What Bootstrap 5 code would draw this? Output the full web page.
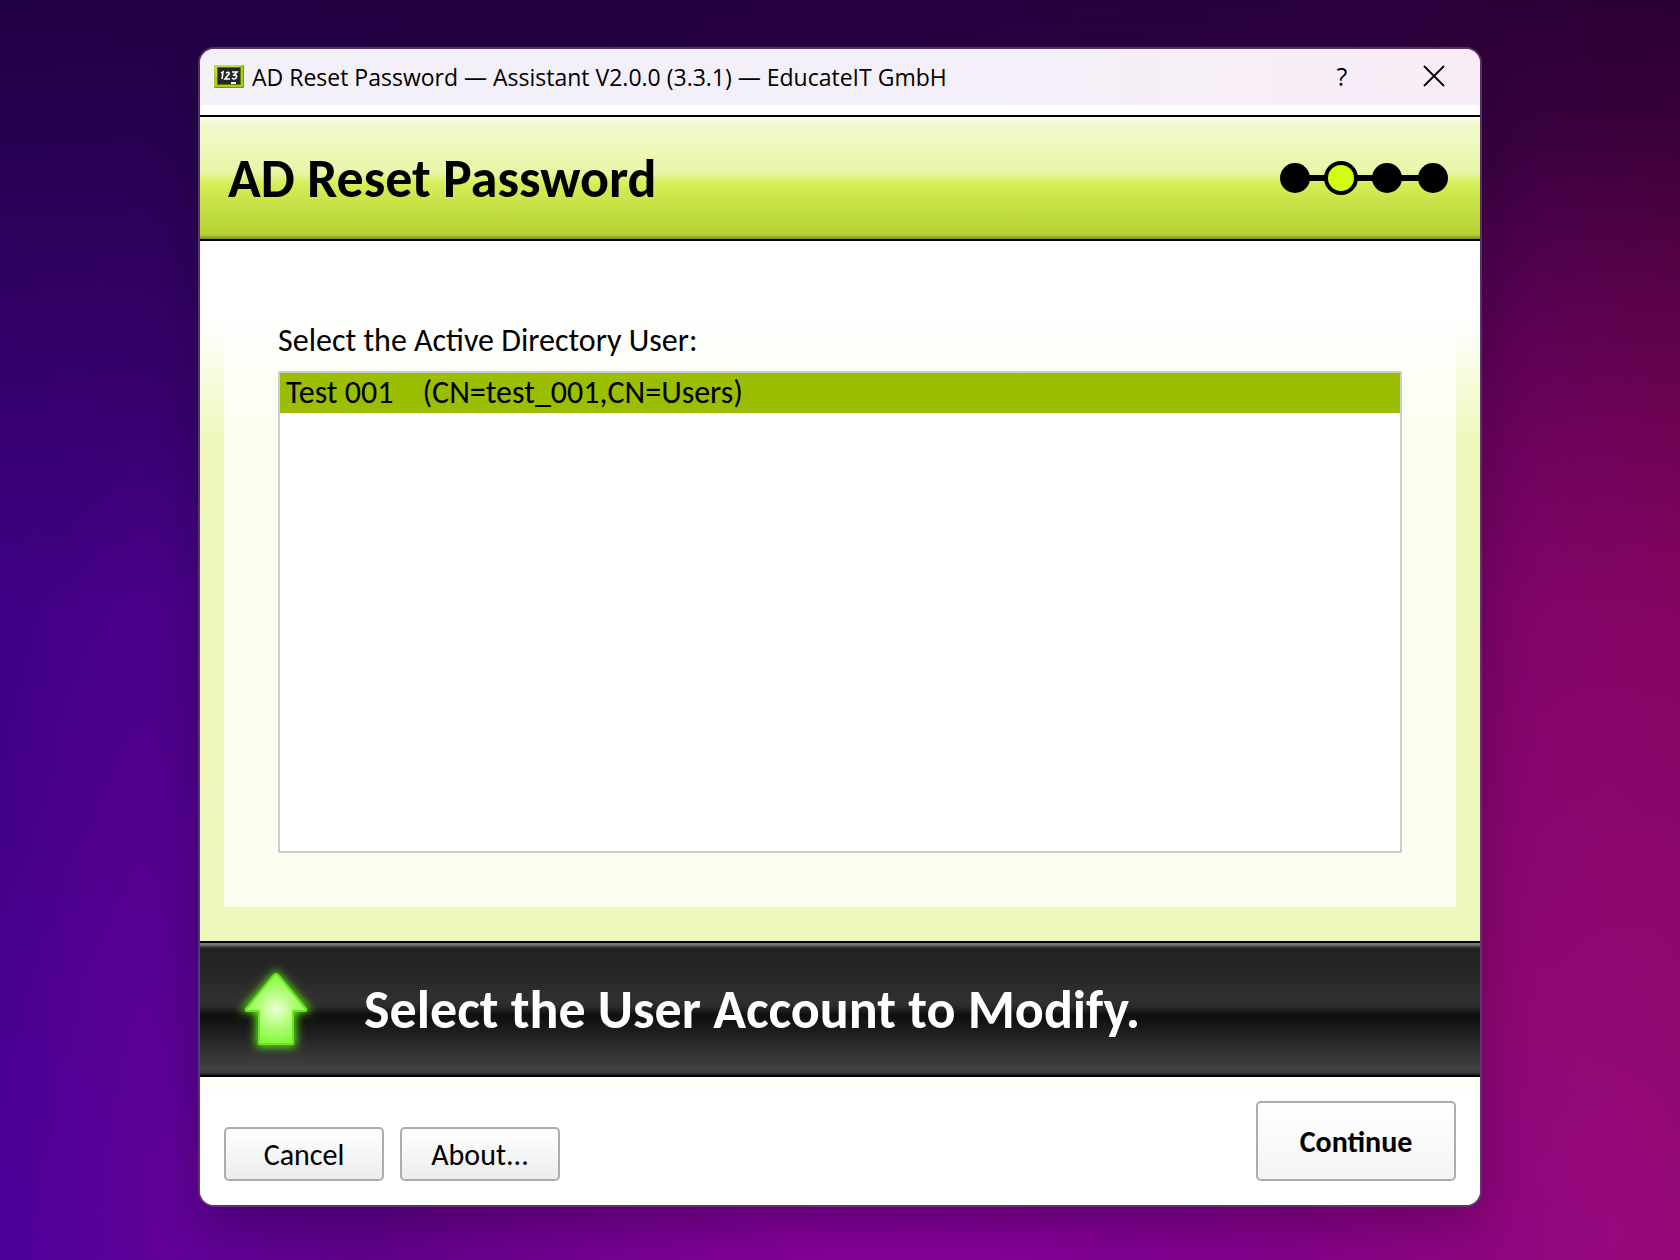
<!DOCTYPE html>
<html lang="en">
<head>
<meta charset="utf-8">
<meta name="viewport" content="width=device-width, initial-scale=1">
<title>AD Reset Password</title>
<link rel="stylesheet" href="https://cdn.jsdelivr.net/npm/bootstrap@5.3.0/dist/css/bootstrap.min.css">
<style>
  body {
    font-family: Carlito, Lato, sans-serif;
    font-size: 32px;
    line-height: 36px;
    color: #000;
    padding: 47px 24px 53px;
    background:
      radial-gradient(ellipse 50% 34% at 54% 103%, rgba(142, 0, 160, .95), rgba(142, 0, 160, 0)),
      radial-gradient(ellipse 30% 88% at 96% 98%, rgba(154, 10, 122, .95), rgba(148, 8, 118, .75) 40%, rgba(140, 4, 110, 0)),
      radial-gradient(ellipse 12% 56% at 10% 90%, rgba(100, 0, 156, .85), rgba(100, 0, 156, 0)),
      radial-gradient(ellipse 16% 40% at 0% 104%, rgba(76, 0, 160, .9), rgba(76, 0, 160, 0)),
      linear-gradient(180deg, rgba(22, 0, 46, .76), rgba(22, 0, 46, 0) 48%),
      linear-gradient(90deg, #400086, #440084 12%, #66006c 82%, #700048);
  }
  .app-window {
    max-width: 1284px;
    background: #fff;
    border: 2px solid rgba(96, 62, 112, .8);
    background-clip: padding-box;
    border-radius: 16px;
    overflow: hidden;
    box-shadow: 0 16px 48px rgba(0, 0, 0, .25);
  }
  .title-bar {
    height: 56px;
    padding: 0 0 0 14px;
    background: linear-gradient(90deg, #f3f0f8, #f4eff8 65%, #f9ecf7);
    font-family: "Open Sans", sans-serif;
    font-size: 23px;
  }
  .caption-btn { width: 92px; height: 56px; border: 0; background: none; padding: 0 0 2px; color: #000; font-size: 25px; }
  .app-banner {
    margin-top: 10px;
    height: 126px;
    padding: 0 31px 0 28px;
    border: solid #000;
    border-width: 2px 0;
    background: linear-gradient(180deg, #fbfeee 0, #f2fad0 6px, #e7f6a6 56px, #d9f062 64px, #d2ec54 70px, #b5d231 116px, #b0cc30 118px, #7c9020 122px);
  }
  .app-banner h1, .prompt-bar h2 { font-size: 54px; font-weight: 700; line-height: 56px; padding-top: 2px; }
  .page-area {
    padding: 0 24px 34px;
    background: linear-gradient(180deg, #fff 80px, #eef8bd 195px);
  }
  .page-panel {
    padding: 82px 54px 54px;
    background: linear-gradient(180deg, #fff 70px, #fbfff0 195px);
  }
  .page-panel label { margin-bottom: 12px; }
  .user-list {
    height: 482px;
    border: 2px solid #ccc;
    background: #fff;
    color: #000;
    outline: 0;
    padding: 0;
    overflow: hidden;
    font-size: 32px;
  }
  .user-list option { height: 40px; min-height: 40px; padding: 0 6px; color: #000; }
  .user-list option:checked { background: #9bbf00 linear-gradient(#9bbf00, #9bbf00); color: #000; }
  .prompt-bar {
    height: 136px;
    padding-left: 32px;
    border: solid #000;
    border-width: 2px 0;
    color: #fff;
    background: linear-gradient(180deg, #808080 0, #6e6e6e 2px, #222 5px, #242424 20px, #303030 58px, #2a2a2a 64px, #0e0e0e 72px, #151515 80px, #424242 126px, #3e3e3e 129px, #222 132px);
  }
  .prompt-bar h2 { margin-left: 44px; }
  .action-bar { padding: 24px 24px; background: linear-gradient(180deg, #fdfff4, #fff 20px); }
  .dlg-btn {
    width: 160px;
    height: 54px;
    padding: 2px 0 0;
    border: 2px solid #adadad;
    border-radius: 5px;
    color: #000;
    background: linear-gradient(180deg, #fff, #ececec);
    font-size: 30px;
  }
  .dlg-btn-main { width: 200px; height: 80px; font-weight: 700; background: linear-gradient(180deg, #fff, #f4f4f4); }
</style>
</head>
<body class="min-vh-100">
<main class="app-window mx-auto">
  <header class="title-bar d-flex align-items-center">
    <svg width="30" height="24" viewBox="0 0 30 24" class="flex-shrink-0" aria-hidden="true">
      <rect width="30" height="23" rx="1" fill="#769500"/>
      <rect width="29" height="22" rx="1" fill="#a9cf1a"/>
      <path d="M0 0h28L2 12z" fill="#c0e04a"/>
      <rect x="3" y="2" width="24" height="18" fill="#5d7800"/>
      <rect x="4" y="3" width="22" height="16" fill="#25282a"/>
      <path d="M7 8l2-1-1 7M12 8q4-2 3 1l-4 5h5M18 7h5l-3 3q4 0 2 3-2 2-4 0" fill="none" stroke="#fff" stroke-width="1.600"/>
      <path d="M17 17h5v2h-5z" fill="#fff"/>
    </svg>
    <span class="ms-2 me-auto text-nowrap">AD Reset Password — Assistant V2.0.0 (3.3.1) — EducateIT GmbH</span>
    <button type="button" class="caption-btn" aria-label="Help">?</button>
    <button type="button" class="caption-btn" aria-label="Close">
      <svg width="22" height="22" viewBox="0 0 22 22" class="d-block mx-auto"><path d="M1 1l20 20M21 1L1 21" stroke="#000" stroke-width="1.800"/></svg>
    </button>
  </header>

  <section class="app-banner d-flex align-items-center justify-content-between">
    <h1 class="m-0">AD Reset Password</h1>
    <svg width="169" height="34" viewBox="0 0 169 34" role="img" aria-label="Step 2 of 4">
      <path d="M15 17h138" stroke="#000" stroke-width="6"/>
      <circle cx="15" cy="17" r="15"/>
      <circle cx="61" cy="17" r="15" fill="#d2ff0c" stroke="#000" stroke-width="4"/>
      <circle cx="107" cy="17" r="15"/>
      <circle cx="153" cy="17" r="15"/>
    </svg>
  </section>

  <section class="page-area">
    <div class="page-panel">
      <label for="users" class="d-block">Select the Active Directory User:</label>
      <select id="users" class="user-list d-block w-100" size="10">
        <option selected>Test 001&nbsp;&nbsp;&nbsp;&nbsp;(CN=test_001,CN=Users)</option>
      </select>
    </div>
  </section>

  <section class="prompt-bar d-flex align-items-center">
    <svg width="88" height="100" viewBox="0 0 88 100" class="flex-shrink-0" aria-hidden="true">
      <defs>
        <radialGradient id="arrowFill" gradientUnits="userSpaceOnUse" cx="44" cy="50" r="38">
          <stop offset="0" stop-color="#f0ffd8"/><stop offset=".45" stop-color="#b4fc7c"/><stop offset="1" stop-color="#7cfa30"/>
        </radialGradient>
        <filter id="arrowGlow" x="-40%" y="-40%" width="180%" height="180%"><feGaussianBlur stdDeviation="5"/></filter>
      </defs>
      <path d="M44 14L76 51H62V86H26V51H12Z" fill="#62e81c" stroke="#62e81c" stroke-width="4" filter="url(#arrowGlow)"/>
      <path d="M42 16Q44 14 46 16L74 50Q75 52 73 52H61V85H27V52H15Q13 52 14 50Z" fill="url(#arrowFill)" stroke="#66e81c" stroke-width="2" stroke-linejoin="round"/>
    </svg>
    <h2 class="mb-0">Select the User Account to Modify.</h2>
  </section>

  <footer class="action-bar d-flex align-items-end gap-3">
    <button type="button" class="dlg-btn">Cancel</button>
    <button type="button" class="dlg-btn">About...</button>
    <button type="button" class="dlg-btn dlg-btn-main ms-auto">Continue</button>
  </footer>
</main>
<script src="https://cdn.jsdelivr.net/npm/bootstrap@5.3.0/dist/js/bootstrap.bundle.min.js"></script>
</body>
</html>
